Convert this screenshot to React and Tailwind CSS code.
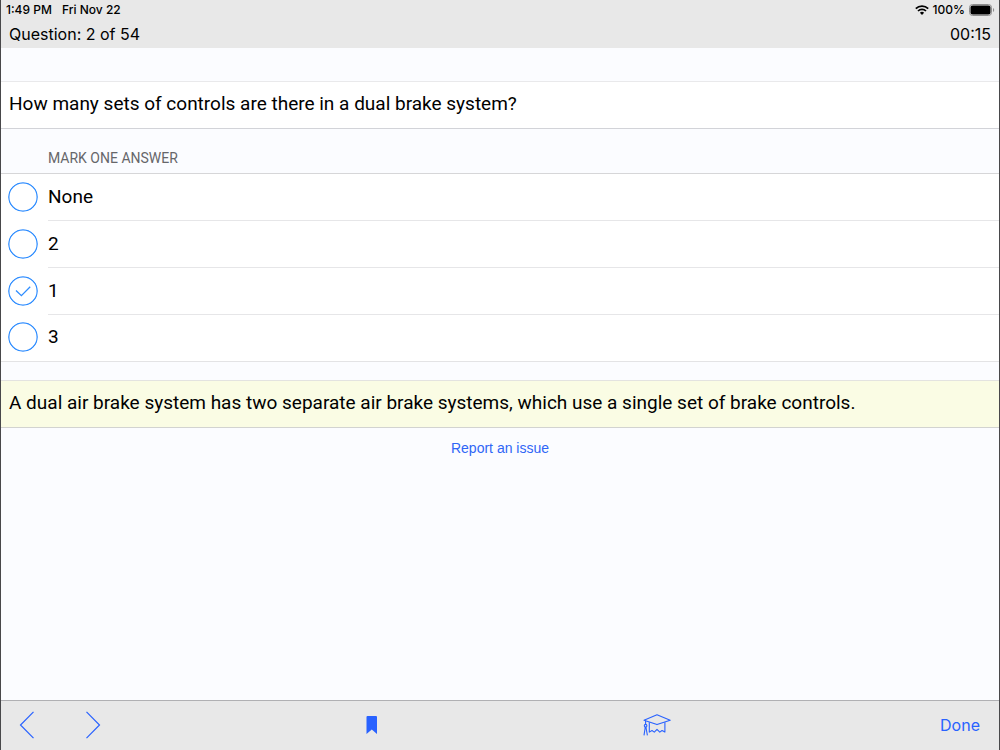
import { useState } from "react";

const ANSWERS = ["None", "2", "1", "3"];

function StatusBar() {
  return (
    <div className="flex h-5 items-center justify-between pl-[5px] pr-1 text-[12px] leading-5 font-medium">
      <div className="flex gap-[10px]">
        <span>1:49 PM</span>
        <span>Fri Nov 22</span>
      </div>
      <div className="flex items-center gap-1">
        <svg width="14" height="10" viewBox="0 0 14 10" aria-hidden="true">
          <g fill="none" stroke="#000" strokeWidth="1.7">
            <path d="M0.8 3.6a8.8 8.8 0 0 1 12.4 0" />
            <path d="M3 6a5.7 5.7 0 0 1 8 0" />
          </g>
          <path d="M7 10 4.9 7.8a3 3 0 0 1 4.2 0Z" />
        </svg>
        <span>100%</span>
        <svg width="26" height="12" viewBox="0 0 26 12" aria-hidden="true">
          <rect x="0.5" y="0.5" width="22" height="11" rx="3" fill="none" stroke="#8e8e8e" />
          <rect x="1.5" y="1.5" width="20" height="9" rx="2" />
          <path d="M24 4v4c1.6-.6 1.6-3.4 0-4Z" fill="#8e8e8e" />
        </svg>
      </div>
    </div>
  );
}

function AnswerRow({ label, checked, onSelect }) {
  return (
    <label className="group flex h-[47px] cursor-pointer items-center gap-2.5 pl-[7px] last:h-[46px]">
      <input
        type="radio"
        name="answer"
        className="peer sr-only"
        checked={checked}
        onChange={onSelect}
      />
      <svg
        className="mb-0.5 shrink-0 rounded-full peer-focus-visible:outline-2"
        width="30"
        height="30"
        viewBox="0 0 30 30"
        fill="none"
        stroke="#2f8dff"
        strokeWidth="1.3"
        aria-hidden="true"
      >
        <circle cx="15" cy="15" r="14.2" />
        {checked && <path d="m8 14.5 5.4 5.2 8.8-9" />}
      </svg>
      <span className="flex h-full flex-1 items-center border-b border-[#e6e6e8] text-[19px] group-last:border-transparent">
        {label}
      </span>
    </label>
  );
}

function App() {
  const [selected, setSelected] = useState("1");

  return (
    <div className="flex min-h-screen flex-col border-x border-[#48484a] bg-[#fbfcff] font-['Roboto',sans-serif] text-black">
      <header className="bg-[#e8e8e8] pb-1 font-['Inter',sans-serif]">
        <StatusBar />
        <div className="flex h-6 items-center justify-between px-2 pt-[3px] text-[16px]">
          <span>Question: 2 of 54</span>
          <span>00:15</span>
        </div>
      </header>

      <main className="flex-1 pt-[33px]">
        <h1 className="flex min-h-12 items-center border-t border-b border-t-[#e9e9eb] border-b-[#d2d3d8] bg-white px-2 pb-0.5 text-[19px]">
          How many sets of controls are there in a dual brake system?
        </h1>

        <fieldset>
          <legend className="flex h-11 items-end pb-1 pl-[47px] text-[14px] text-[#66666a]">
            MARK ONE ANSWER
          </legend>
          <div className="border-t border-b border-t-[#d6d6d8] border-b-[#e3e3e5] bg-white">
            {ANSWERS.map((answer) => (
              <AnswerRow
                key={answer}
                label={answer}
                checked={selected === answer}
                onSelect={() => setSelected(answer)}
              />
            ))}
          </div>
        </fieldset>

        <p className="mt-[18px] flex min-h-12 items-center border-t border-b border-t-[#e3e3e0] border-b-[#d2d3d0] bg-[#fafce4] px-2 pb-0.5 text-[19px]">
          A dual air brake system has two separate air brake systems, which use a single set of brake controls.
        </p>

        <div className="flex justify-center pt-2.5">
          <a
            href="#report"
            className="font-['Liberation_Sans',sans-serif] text-[14px] leading-5 text-[#2f66f6]"
          >
            Report an issue
          </a>
        </div>
      </main>

      <footer className="flex h-[50px] items-center justify-between border-t border-[#b0b0b3] bg-[#e8e8e8] pb-0.5 pl-[18px] pr-[19px] text-[#2962ff]">
        <div className="flex gap-[50px]">
          <button type="button" aria-label="Previous question">
            <svg width="16" height="28" viewBox="0 0 16 28" fill="none" stroke="currentColor" strokeWidth="1.2">
              <path d="M14.5 0.8 1.5 14l13 13.2" />
            </svg>
          </button>
          <button type="button" aria-label="Next question">
            <svg width="16" height="28" viewBox="0 0 16 28" fill="none" stroke="currentColor" strokeWidth="1.2">
              <path d="m1.5 0.8 13 13.2-13 13.2" />
            </svg>
          </button>
        </div>
        <button type="button" aria-label="Bookmark">
          <svg width="12" height="18" viewBox="0 0 12 18" fill="currentColor">
            <path d="M1.5 0h8.5Q11 0 11 1v17l-5.2-4.6L.5 18V1Q.5 0 1.5 0Z" />
          </svg>
        </button>
        <button type="button" aria-label="Explanation">
          <svg
            width="28"
            height="22"
            viewBox="0 0 28 22"
            fill="none"
            stroke="currentColor"
            strokeWidth="1.1"
            strokeLinejoin="round"
          >
            <path d="M1 6.2 14 .8l13.2 5.4L14 10.6Z" />
            <path d="M6.3 8.2v9.9l2.7-1.6 2.3 1.6 2.7-2.7 2.8 2.7 2.2-1.6 2.9 1.6V8.2" />
            <path d="M2.6 7v3.3" />
            <circle cx="2.6" cy="11.7" r="1.3" />
            <path d="M2.3 13 1 21.3M2.9 13l1.5 8.3" />
          </svg>
        </button>
        <button type="button" className="pl-1 font-['Inter',sans-serif] text-[16px]">
          Done
        </button>
      </footer>
    </div>
  );
}

export default App;
